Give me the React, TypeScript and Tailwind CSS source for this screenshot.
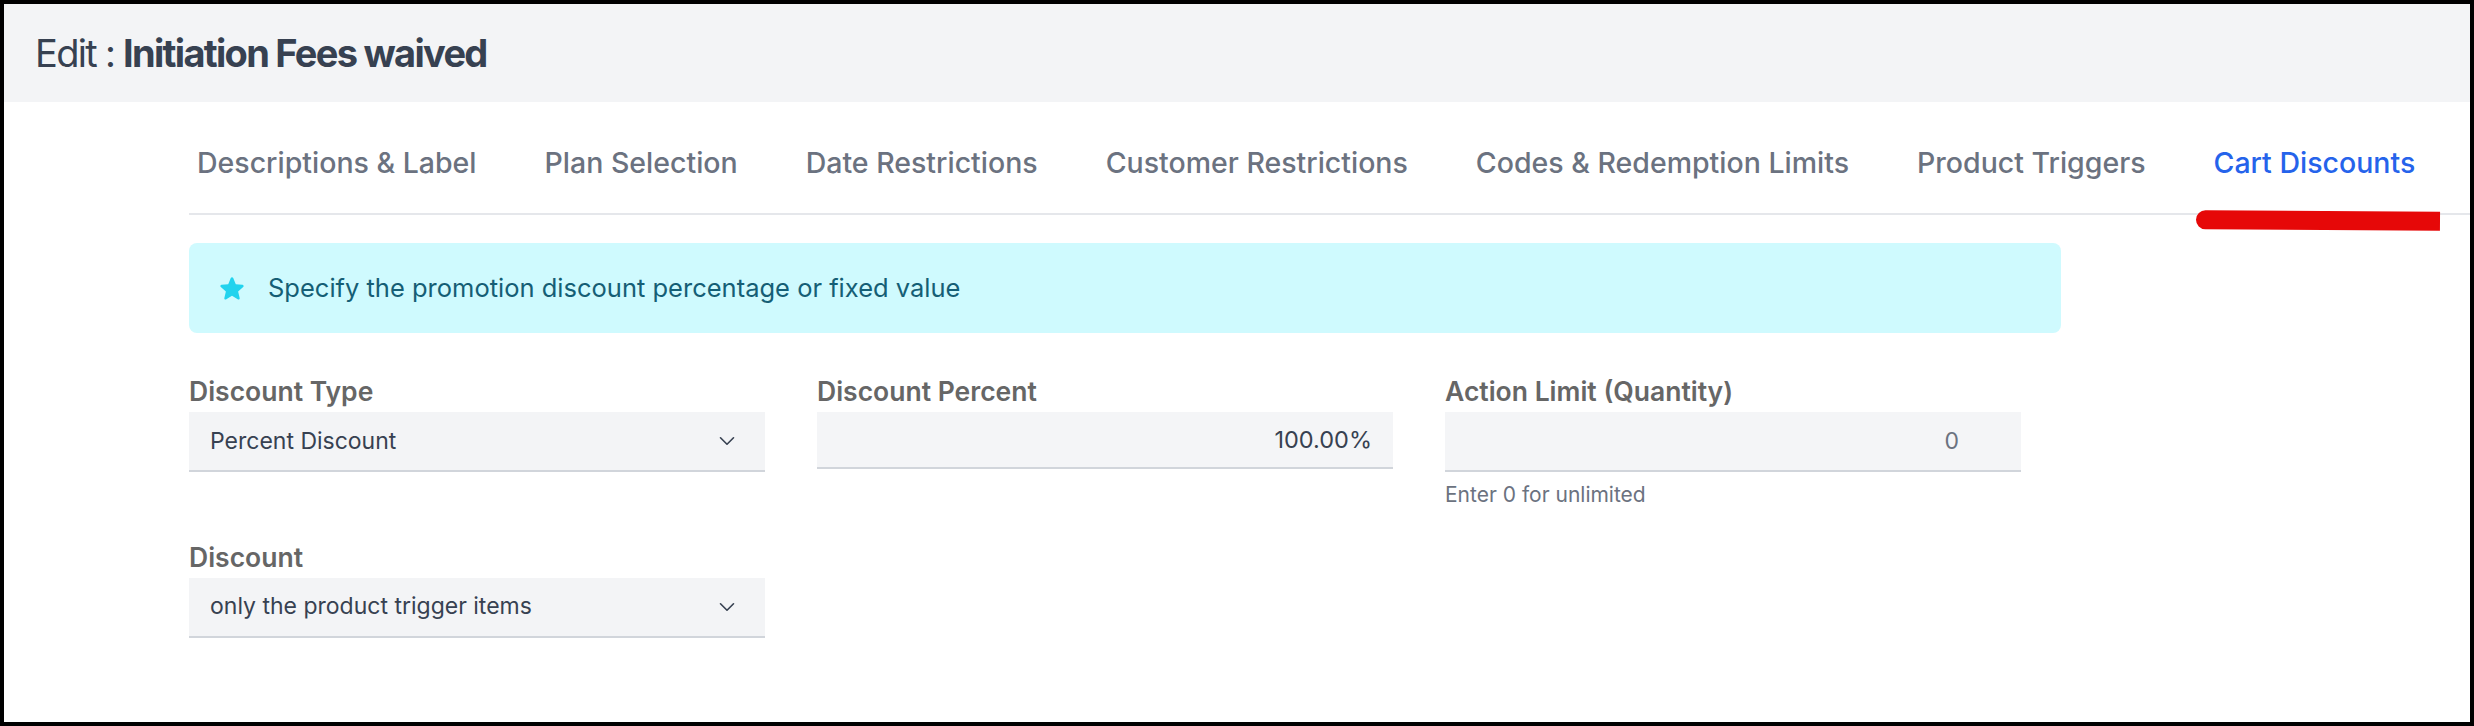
import { ChevronDown } from "lucide-react";

const tabs = [
  "Descriptions & Label",
  "Plan Selection",
  "Date Restrictions",
  "Customer Restrictions",
  "Codes & Redemption Limits",
  "Product Triggers",
  "Cart Discounts",
];

function StarIcon() {
  return (
    <svg viewBox="0 0 20 20" className="h-[28px] w-[28px] fill-[#22d3ee]">
      <path d="M10.868 2.884c-.321-.772-1.415-.772-1.736 0l-1.83 4.401-4.753.381c-.833.067-1.171 1.107-.536 1.651l3.62 3.102-1.106 4.637c-.194.813.691 1.456 1.405 1.02L10 15.591l4.069 2.485c.713.436 1.598-.207 1.404-1.02l-1.106-4.637 3.62-3.102c.635-.544.297-1.584-.536-1.65l-4.752-.382-1.831-4.401z" />
    </svg>
  );
}

function SelectBox({ value }: { value: string }) {
  return (
    <div className="flex h-[60px] items-center justify-between border-b-2 border-[#d1d5db] bg-[#f3f4f6] pl-[21px] pr-[25px] text-[23px] text-[#374151]">
      <span>{value}</span>
      <ChevronDown size={26} strokeWidth={1.5} />
    </div>
  );
}

function Label({ children }: { children: string }) {
  return <div className="mb-[5px] text-[26.5px] leading-[32px] font-semibold text-[#666666]">{children}</div>;
}

export default function App() {
  return (
    <div className="relative flex h-[726px] w-[2474px] flex-col border-4 border-black bg-white [font-family:Inter,sans-serif]">
      <header className="flex h-[98px] items-center bg-[#f3f4f6] pl-[31px] text-[38px] tracking-[-0.045em] text-[#374151]">
        <span className="whitespace-pre">Edit : </span>
        <span className="font-bold">Initiation Fees waived</span>
      </header>

      <div className="pl-[185px]">
        <nav className="flex h-[113px] items-center gap-[68px] border-b-2 border-[#e5e7eb] pl-2 pt-[12px] text-[28.5px] font-medium text-[#6b7280]">
          {tabs.map((t) => (
            <div key={t} className={t === "Cart Discounts" ? "text-[#2563eb]" : ""}>
              {t}
            </div>
          ))}
        </nav>

        <div className="mt-[28px] flex h-[90px] w-[1872px] items-center gap-[22px] rounded-lg bg-[#cffafe] pl-[29px] text-[25.5px] text-[#155e75]">
          <StarIcon />
          <span>Specify the promotion discount percentage or fixed value</span>
        </div>

        <div className="mt-[42px] grid grid-cols-[576px_576px_576px] gap-x-[52px] gap-y-[30px]">
          <div>
            <Label>Discount Type</Label>
            <SelectBox value="Percent Discount" />
          </div>
          <div>
            <Label>Discount Percent</Label>
            <div className="flex h-[57px] items-center justify-end border-b-2 border-[#d1d5db] bg-[#f4f5f7] pr-[21px] text-[23.5px] text-[#374151]">
              100.00%
            </div>
          </div>
          <div>
            <Label>Action Limit (Quantity)</Label>
            <div className="flex h-[60px] items-center justify-end border-b-2 border-[#d1d5db] bg-[#f4f5f7] pr-[62px] text-[23px] text-[#6b7280]">
              0
            </div>
            <div className="mt-[7px] text-[21px] text-[#6b7280]">Enter 0 for unlimited</div>
          </div>
          <div>
            <Label>Discount</Label>
            <SelectBox value="only the product trigger items" />
          </div>
        </div>
      </div>

      <div className="absolute left-[2192px] top-[207px] h-[19px] w-[244px] rotate-[0.4deg] rounded-l-full bg-[#e60808]" />
    </div>
  );
}
